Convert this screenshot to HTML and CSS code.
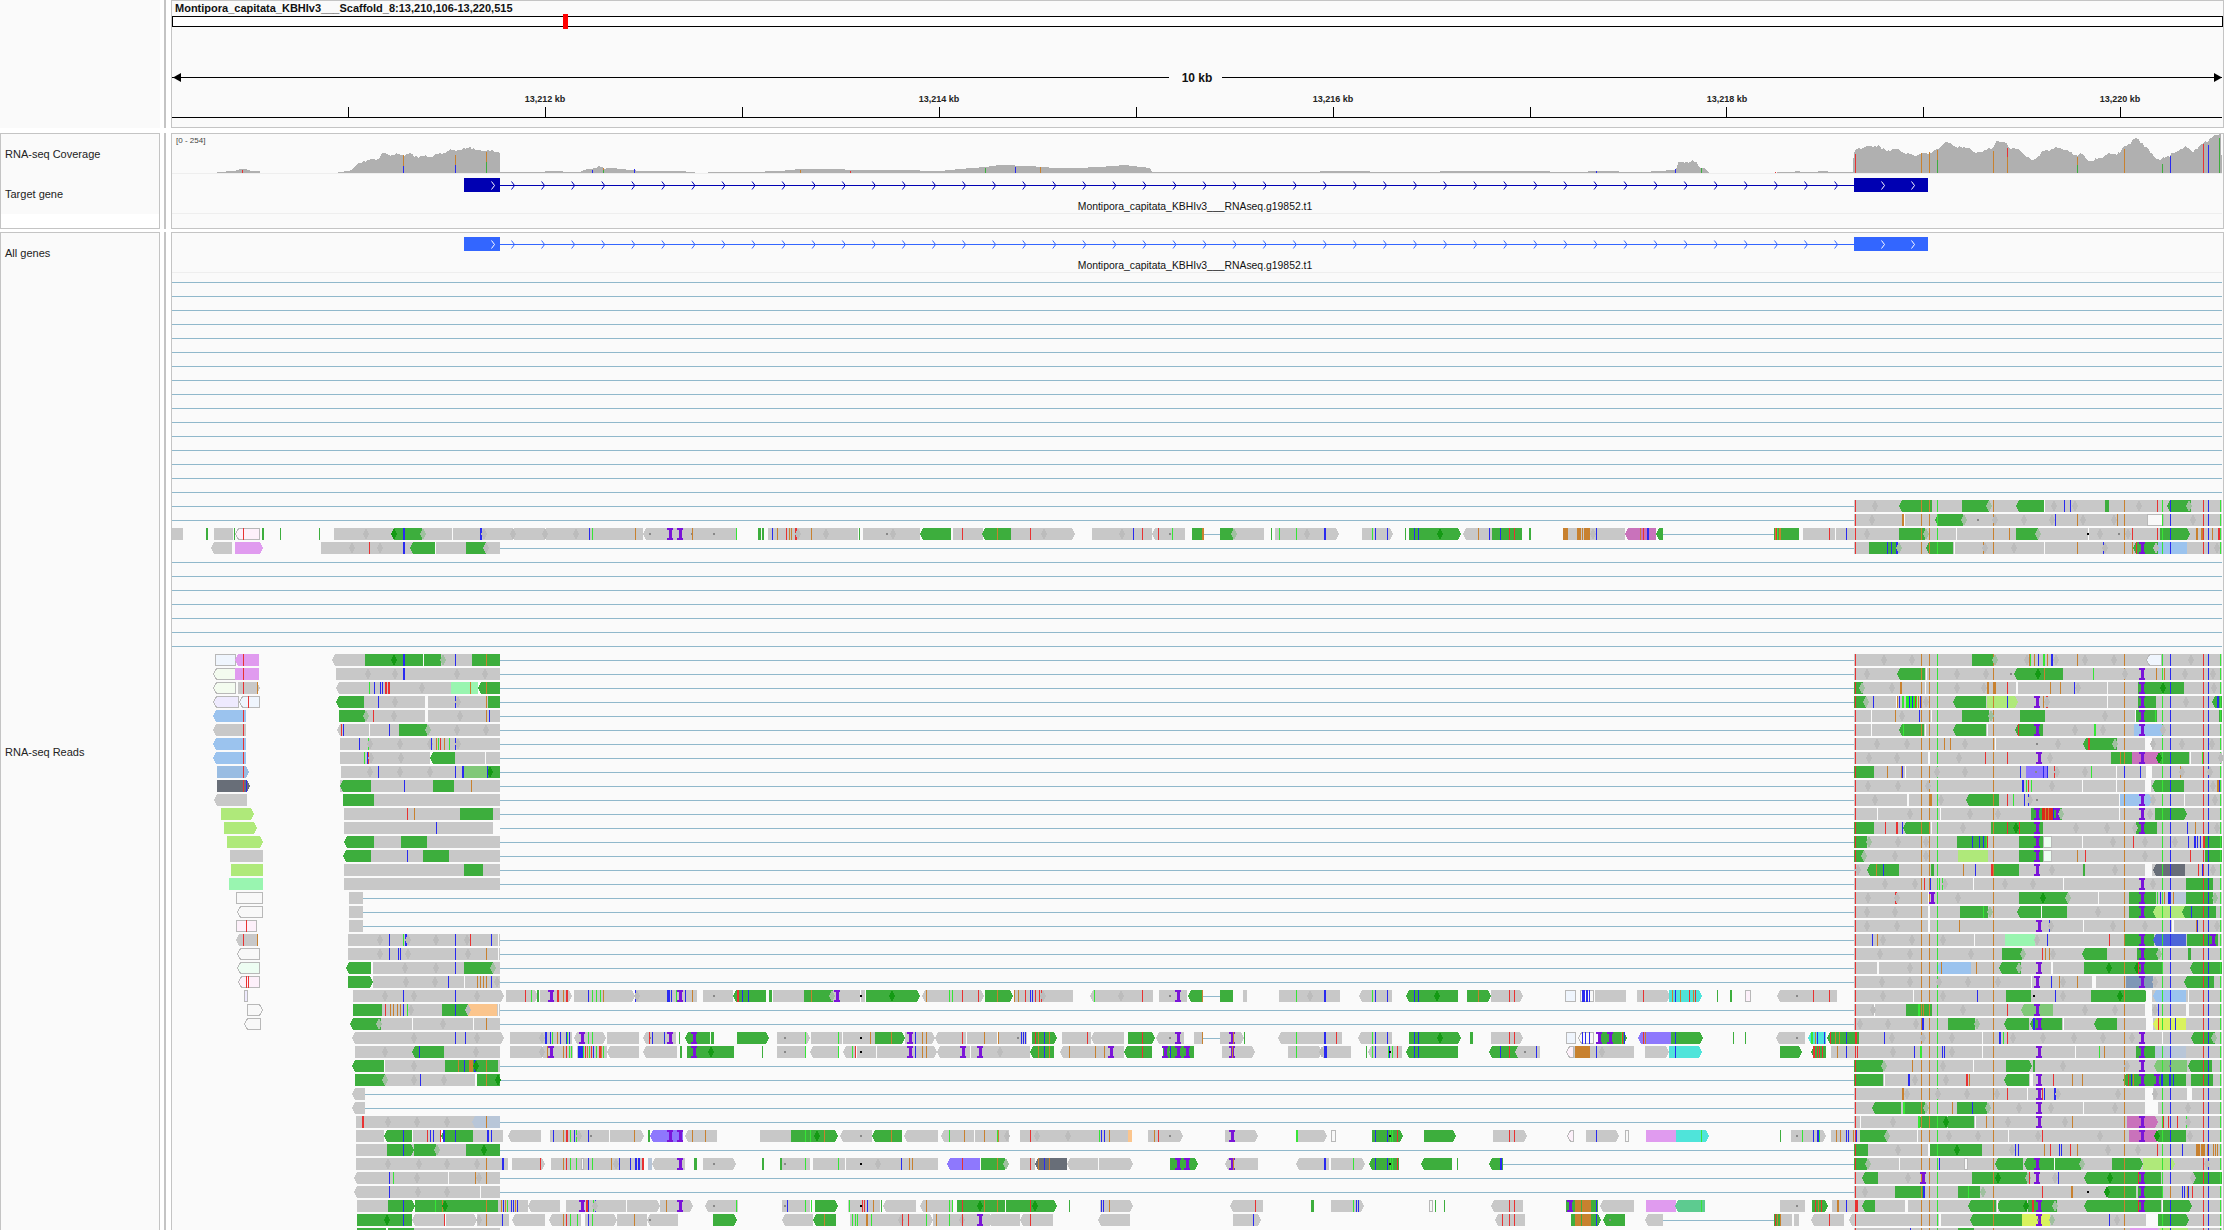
FILE: index.html
```html
<!doctype html>
<html lang="en">
<head>
<meta charset="utf-8">
<title>IGV</title>
<link rel="stylesheet" href="styles.css">
</head>
<body>
<main class="igv">
  <section class="band band-ruler">
    <div class="names names-plain"></div>
    <div class="sep"></div>
    <div class="panel">
      <div class="locus">Montipora_capitata_KBHIv3___Scaffold_8:13,210,106-13,220,515</div>
      <div class="ideogram"><span class="viewport"></span></div>
      <svg class="ruler" viewBox="172 27 2051 100" width="2051" height="100">
        <rect class="ink" x="172" y="77" width="997" height="1"/>
        <rect class="ink" x="1222" y="77" width="1000" height="1"/>
        <polygon class="ink" points="173,77.5 181,73 181,82"/>
        <polygon class="ink" points="2222,77.5 2214,73 2214,82"/>
        <text class="span-label" x="1197" y="82">10 kb</text>
        <rect class="ink" x="172" y="117" width="2050" height="1"/>
        <rect class="ink" x="348" y="107" width="1" height="10"/>
        <rect class="ink" x="545" y="107" width="1" height="10"/>
        <rect class="ink" x="742" y="107" width="1" height="10"/>
        <rect class="ink" x="939" y="107" width="1" height="10"/>
        <rect class="ink" x="1136" y="107" width="1" height="10"/>
        <rect class="ink" x="1333" y="107" width="1" height="10"/>
        <rect class="ink" x="1530" y="107" width="1" height="10"/>
        <rect class="ink" x="1726" y="107" width="1" height="10"/>
        <rect class="ink" x="1923" y="107" width="1" height="10"/>
        <rect class="ink" x="2120" y="107" width="1" height="10"/>
        <text class="tick-label" x="545" y="102">13,212 kb</text>
        <text class="tick-label" x="939" y="102">13,214 kb</text>
        <text class="tick-label" x="1333" y="102">13,216 kb</text>
        <text class="tick-label" x="1727" y="102">13,218 kb</text>
        <text class="tick-label" x="2120" y="102">13,220 kb</text>
      </svg>
    </div>
  </section>

  <section class="band band-feature">
    <div class="names names-boxed">
      <div class="name name-short">RNA-seq Coverage</div>
      <div class="name name-short">Target gene</div>
    </div>
    <div class="sep"></div>
    <div class="panel">
      <svg id="feature" class="track" viewBox="172 134 2051 94" width="2051" height="94">
        <text class="gene-label" x="1195" y="210">Montipora_capitata_KBHIv3___RNAseq.g19852.t1</text>
        <text class="range-label" x="176" y="143">[0 - 254]</text>
      </svg>
    </div>
  </section>

  <section class="band band-data">
    <div class="names names-boxed names-open">
      <div class="name name-short">All genes</div>
      <div class="name name-long">RNA-seq Reads</div>
    </div>
    <div class="sep"></div>
    <div class="panel panel-open">
      <svg id="data" class="track" viewBox="172 233 2051 997" width="2051" height="997">
        <text class="gene-label" x="1195" y="269">Montipora_capitata_KBHIv3___RNAseq.g19852.t1</text>
      </svg>
    </div>
  </section>
</main>
<script src="tracks.js"></script>
</body>
</html>
```
FILE: styles.css
```css
html, body {
  margin: 0;
  height: 1230px;
  overflow: hidden;
  background: #ffffff;
  font-family: "Liberation Sans", Arial, sans-serif;
}
.igv { display: flex; flex-direction: column; width: 2240px; }
.band { display: flex; flex: none; }
.band-ruler { height: 128px; margin-bottom: 5px; }
.band-feature { height: 96px; margin-bottom: 3px; }
.band-data { height: 998px; }

.names { width: 160px; flex: none; box-sizing: border-box; }
.names-plain { background: #fafafa; }
.names-boxed {
  border: 1px solid #c4c4c4;
  background: linear-gradient(#fafafa 80px, #ffffff 80px);
}
.names-open { border-bottom: 0; background: #fafafa; }
.name {
  display: flex;
  align-items: center;
  padding-left: 4px;
  font-size: 11px;
  color: #222222;
}
.name-short { height: 40px; }
.name-long { height: 958px; }

.sep { width: 2px; margin: 0 5px 0 4px; background: #c4c4c4; flex: none; }

.panel {
  width: 2053px;
  box-sizing: border-box;
  flex: none;
  border: 1px solid #c4c4c4;
  background: #fafafa;
  display: flex;
  flex-direction: column;
}
.panel-open { border-bottom: 0; }

.locus {
  height: 15px;
  line-height: 15px;
  padding-left: 3px;
  font-size: 11px;
  font-weight: 700;
  color: #111111;
  white-space: nowrap;
}
.ideogram {
  position: relative;
  height: 11px;
  box-sizing: border-box;
  border: 1px solid #000000;
  background: #ffffff;
}
.viewport {
  position: absolute;
  left: 390px;
  top: -3px;
  width: 5px;
  height: 15px;
  background: #ff0000;
}
.ruler, .track { display: block; flex: none; }
.track { shape-rendering: crispEdges; }

.ink { fill: #000000; }
.span-label { font-size: 12px; font-weight: 700; text-anchor: middle; fill: #111111; }
.tick-label { font-size: 9px; font-weight: 700; text-anchor: middle; fill: #222222; }
.gene-label { font-size: 10.4px; text-anchor: middle; fill: #111111; }
.range-label { font-size: 8px; fill: #444444; }

.rule { fill: #eeeeee; }
.lane { fill: #90b8cb; }
.cover { fill: #b0b0b0; }
.target { fill: #0000b2; }
.allgene { fill: #3366ff; }
.chev-t, .chev-a, .chev-w { fill: none; stroke-width: 1; shape-rendering: auto; }
.chev-t { stroke: #0000b2; }
.chev-a { stroke: #3366ff; }
.chev-w { stroke: #ffffff; }

.b-gray { fill: #c8c8c8; }
.b-g { fill: #3dae3d; }
.b-p { fill: #e09bef; }
.b-b { fill: #9bc3ee; }
.b-b2 { fill: #99bce2; }
.b-m { fill: #c972bb; }
.b-v { fill: #8e78fd; }
.b-l { fill: #afe97a; }
.b-t { fill: #99f5b0; }
.b-c { fill: #4fe4da; }
.b-o { fill: #fbc58d; }
.b-d { fill: #686e78; }
.b-s { fill: #7e97b6; }
.b-y { fill: #d9f25e; }
.b-n { fill: #4d66d8; }
.b-u { fill: #b8c6d8; }
.b-h { fill: #80c878; }
.b-q { fill: #5dcb90; }
.b-nn { fill: #22ee22; }
.b-rr { fill: #d92a1a; }
.b-oo { fill: #c97a1e; }
.b-w, .b-wb, .b-wg, .b-wv, .b-wp, .b-wt { stroke: #b8b8b8; stroke-width: 1; }
.b-w { fill: #f8f8f8; }
.b-wb { fill: #eff5fd; }
.b-wg { fill: #f3fbef; }
.b-wv { fill: #eeeafe; }
.b-wp { fill: #fdf0fa; }
.b-wt { fill: #edfdf2; }
.gap { fill: #fafafa; }

.m-r { fill: #e83232; }
.m-o { fill: #c8812f; }
.m-n { fill: #36e636; }
.m-a { fill: #2a2af0; }
.m-g { fill: #3dae3d; }
.m-k { fill: #000000; }
.m-i { fill: #7a14d8; }
.m-dot { fill: #888888; }
.m-x { fill: #bcbcbc; }
.m-X { fill: #149a14; }
.m-z { fill: #9fc09f; }
```
FILE: tracks.js
```js
var NS = 'http://www.w3.org/2000/svg';
var SCALE = {
  L: { o: 160, s: 2.24 },
  R: { o: 1780, s: 3 },
  S: { o: 0, s: 0.7 },
  A: { o: 500, s: 3 },
  B: { o: 1020, s: 3 },
  C: { o: 1500, s: 3 }
};
var COMMON = 'r226 o424 o448 n472 o640 o1033 n1147 a1171 r1270 a1285 n1319';
var layers = { lanes: '', blocks: '', common: '', gaps: '', marks: '' };

function rect(x, y, w, h, cls) {
  return '<rect class="' + cls + '" x="' + x + '" y="' + y + '" width="' + w + '" height="' + h + '"/>';
}
function centre(k) { return 282 + 14 * k; }

function block(c, a, b, left, right, cls) {
  var t = c - 6, e = c + 6, tip = 3, pts;
  if (/b-w/.test(cls)) { t += 0.5; e -= 0.5; a += 0.5; b -= 0.5; }
  var m = c + 0.0;
  pts = (left ? (a + tip) : a) + ',' + t + ' ' + (right ? (b - tip) : b) + ',' + t + ' ';
  if (right) pts += b + ',' + m + ' ';
  pts += (right ? (b - tip) : b) + ',' + e + ' ' + (left ? (a + tip) : a) + ',' + e;
  if (left) pts += ' ' + a + ',' + m;
  return '<polygon class="' + cls + '" points="' + pts + '"/>';
}
function mark(c, g, tok) {
  var m = tok.match(/^([a-zA-Z.:|])(\d+)(?:\*(\d+))?$/);
  if (!m) return;
  var x = Math.round(g.o + (+m[2]) / g.s), w = +(m[3] || 1), t = m[1], s;
  if (t === '|') { layers.gaps += rect(x, c - 6, 1, 12, 'gap'); return; }
  if (t === 'x' || t === 'X' || t === 'z') {
    layers.marks += '<polygon class="m-' + t + '" points="' + (x - 3) + ',' + c + ' ' + x + ',' + (c - 6) + ' ' + (x + 3) + ',' + c + ' ' + x + ',' + (c + 6) + '"/>';
    return;
  }
  if (t === 'I') {
    s = rect(x - 3, c - 6, 6, 2, 'm-i') + rect(x - 1, c - 6, 3, 12, 'm-i') + rect(x - 3, c + 4, 6, 2, 'm-i');
    layers.marks += s;
    return;
  }
  if (t === '.') { layers.marks += rect(x, c - 1, 2, 2, 'm-dot'); return; }
  if (t === ':') { layers.marks += rect(x, c - 1, 2, 2, 'm-k'); return; }
  s = rect(x, c - 6, w, 12, 'm-' + t);
  if (t === 'g' || t === 'n' || t === 'o' || t === 'r' || t === 'a' || t === 'k') layers.marks += s;
}
function row(k, gname, text, base) {
  var g = SCALE[gname], c = centre(k), toks = text.split(/\s+/), i, t, m;
  if (base) layers.blocks += block(c, 1854, 2222, false, false, 'b-gray');
  for (i = 0; i < toks.length; i++) {
    t = toks[i];
    if (!t) continue;
    m = t.match(/^([_~])(\d+)-(\d+)$/);
    if (m) {
      var a0 = Math.round(g.o + (+m[2]) / g.s), b0 = Math.round(g.o + (+m[3]) / g.s);
      if (m[1] === '_') layers.gaps += rect(a0, c - 6, b0 - a0, 12, 'gap');
      else layers.lanes += rect(a0, c, b0 - a0, 1, 'lane');
      continue;
    }
    m = t.match(/^(?:([a-z0-9]+):)?(<)?(\d+)-(\d+)(>)?$/);
    if (m) {
      layers.blocks += block(c, Math.round(g.o + (+m[3]) / g.s), Math.round(g.o + (+m[4]) / g.s), !!m[2], !!m[5], 'b-' + (m[1] || 'gray'));
      continue;
    }
    mark(c, g, t);
  }
  if (base) {
    COMMON.split(' ').forEach(function (tok) {
      var q = tok.match(/^([a-z])(\d+)$/);
      var x = Math.round(SCALE.R.o + (+q[2]) / 3);
      layers.common += rect(x, c - 6, 1, 12, 'm-' + q[1]);
    });
  }
}

/* ---------- lanes behind the reads ---------- */
(function () {
  var k, mid = [19, 52, 53, 56, 57, 58, 59, 60, 62, 64, 65];
  for (k = 27; k <= 50; k++) mid.push(k);
  for (k = 0; k <= 26; k++) {
    if (k < 16 || k >= 20) layers.lanes += rect(172, centre(k), 2050, 1, 'lane');
  }
  layers.lanes += rect(172, centre(16), 1682, 1, 'lane') + rect(172, centre(17), 1682, 1, 'lane');
  mid.forEach(function (n) { layers.lanes += rect(500, centre(n), 1354, 1, 'lane'); });
})();

/* ---------- left block, first rows ---------- */
[
 [18,'26-52 g103*2 121-164 wp:<167-224 r185 g165 g228*2 g269 g357 390-524 x461 g:524-587 X525 a545*2 z588 587-1073 |655 a717*2 x725 x790 |790 x862 |862 x932 a960 n968 o1063'],
 [19,'<115-161 p:168-231> 361-430 x430 430-762 r468 x493 a545*2 g:<561-617 |617 g:685-730 x730'],
 [27,'wb:124-170 p:<168-222 r185 <385-459 g:459-630 X524 a545*2 |588 z633 630-699 a660 g:699-762 o730'],
 [28,'wg:<118-170 p:168-222 r185 394-762 x465 x526 a545*2 x665 x727'],
 [29,'wg:<118-170 175-225> r185 o218 <394-652 n468 a480 a492 a498 r505*2 r510*2 x586 t:652-712 o695 g:<712-762 o730'],
 [30,'wv:<118-178 wb:<178-224 r198 g:<394-457 458-594 a489 x526 _594-600 600-735 a660 x668 o731 g:735-762'],
 [31,'b:<118-192 r185 g:401-459 z462 460-594 r476 x525 _594-600 600-762 x673 a738 o731'],
 [32,'<118-192 r185 <396-535 r405 a410 |468 a514 g:535-598 z600 598-762 x665 x730'],
 [33,'b:<118-192 r185 403-762 a445 n465 x470 x538 x605 a608 o618 n622 r628 o636 n648 a660 x668'],
 [34,'b:<118-192 r185 403-605 n458 a463 r466 x472 x540 g:<605-660 660-762 |727'],
 [35,'b2:128-200> r185 405-680 x470 a489 x538 x605 a660 a677*2 h:680-733 g:733-762 X740 a733'],
 [47,'<170-218 r185 o218 421-762 x492 a514 n544 a548*2 x555 x618 a660 x688 r695 a742 |758'],
 [48,'w:<172-223 421-762 x492 a514 a532 a538 x556 a660 x690 o730 |758'],
 [49,'wt:<172-223 g:<416-473 477-681 x548 x618 a660 g:681-745 z747 745-762'],
 [50,'wp:<174-223 r193 r197 g:421-478> 478-762 x550 x615 a645 |682 o710 o717 o723 o730 a742 x755'],
 [51,'wv:189-198 432-770> x505 a545 x570 a660 x710'],
 [52,'w:194-230> g:432-497 497-632 r504 o515 o522 o530 o538 a545 n553 x563 g:632-690 a660 o:690-755 x690 |758 755-762'],
 [53,'w:<189-226 g:<425-495 z490 495-762 |565 x634 |702 o730'],
 [54,'<430-770> x570 a660 a684 x710'],
 [55,'437-762 x505 g:<565-636 a580 x707'],
 [56,'g:<430-502 504-638 x570 g:638-757 o668 a680 o692*3 o700 a704*2 X708 o730 757-762'],
 [57,'g:437-503 z503 505-706 x570 a583 x636 g:710-762 o730 X757'],
 [58,'<430-459 ~459-762'],
 [59,'<430-459 ~459-762'],
 [60,'439-762 r453*2 x510 x575 x642 u:<700-762 o730'],
 [61,'439-502 g:<502-564 a545 567-630 r599 a605 a612 r628 g:<630-701 a635*2 a660 701-768 a733*2 a741'],
 [62,'439-762 g:508-568> a545 g:568-618 z620 g:685-762 X725'],
 [63,'439-780> x510 x580 x643 x710 o730 a767'],
 [64,'<435-762 a514 n522 x575 |645 o706 x715 o730'],
 [65,'<435-762 a514 x578 x642 |716'],
 [66,'441-511 g:511-572> a545 g:572-697 n617 o632 X638 g:697-757 o730 757-762'],
 [67,'g:441-510 X508 g:510-565 a545 <565-638 r636 641-710> 710-762 o730 x715'],
 [68,'g:441-506 g:511-568 570-762']
].forEach(function (r) { row(r[0], 'L', r[1]); });

[
 [36,'d:152-175> a172 r170 238-350 g:<238-260 g:303-318 a283 o330'],
 [37,'<150-173 240-350 g:240-262'],
 [38,'l:155-178> 241-350 g:322-345 o290 r285'],
 [39,'l:157-180> 241-345 a305'],
 [40,'l:159-184> g:<241-262 262-350 g:281-299'],
 [41,'161-184 g:<240-260 260-350 g:296-314 a285'],
 [42,'l:162-184 241-350 g:325-338'],
 [43,'t:160-184 241-350'],
 [44,'w:165-184 244-254 ~254-350'],
 [45,'w:<166-184 244-254 ~254-350'],
 [46,'wp:165-180 r172 244-254 ~254-350']
].forEach(function (r) { row(r[0], 'S', r[1]); });

/* ---------- middle reads ---------- */
[
 [18,'A','417-430 <430-710 .448 I510 I540 .572 o577 .640 n709 g775*3 g785*2 805-1075 a815 o832 r859 o866 o874 r885*2 x893 o934 x978 g1078 1090-1260 .1158 x1178 g:<1260-1353 |1355 1360-1450 r1387 g:<1445-1533 o1490 1533-1560'],
 [18,'B','0-165> r31 x72 215-395 x307 a340 r367 <395-495 r415 .448 n457 g:516-549 o547*2 ~549-600 g:600-640 z642 640-732 g754 765-957> n778 n829 x860 a912*2 1026-1118> n1057 a1066 a1102 g1156 g:1167-1323> a1183 a1195 X1260 <1330-1480 o1375 a1408 g:1416-1506 a1441 r1468 r1482'],
 [18,'C','g:0-65> g86*2 189-375 o190*3 o199*2 o232*3 o240 o247 o253*3 o262*3 x280 a289 m:<375-468 o420 r430 a441*2 g:<468-489 ~489-822 g:822-897 o824*2 r828 n832 o836'],
 [18,'C','909-1005 r988 <1005-1062 a1039'],
 [51,'A','18-115> r76 n94 g110*2 120-215> I152 r172*2 o190 r197*2 222-405> a265 n277 n287 n301 o310 a406 x410 405-500 a502 a505*2 a513 n527 I540 a556 o577 500-590 609-700 .640 g:<700-798 r710*2 a727 a745 g:807-816 819-912 g:912-1000 o934 z995 I1010 1000-1080 1083-1095 :1081 g:1098-1175 g:1175-1260> X1175 <1265-1380 o1279 n1348 n1355 1380-1453> r1387 r1435 g:1455-1540> o1490 1543-1560 o1543 o1555'],
 [51,'B','0-158 r16 a31 a37 r46 r58 r64 x70 <210-398 n222 x303 r367 417-500 .448 I474 g:<505-549 o547 ~549-600 g:600-638 669-681 777-960 n829 x870 a912*2 <1017-1116 n1057 a1066 a1102 g:<1158-1255 a1183 a1195 g:1255-1314 X1252 g:1341-1413> o1375 1413-1510> r1468 r1483'],
 [51,'C','wb:195-227 w:240-282 a246*3 a258*2 a268 285-378 411-510> r430 c:507-606> o517 a526 o540 r566 o578 r586 g652 g:690-697 wp:736-752 <830-915 .887 915-1011 r940 r988'],
 [54,'A','0-10> 30-130 x125 130-217 a135*2 a151 n157 o170 a181 a197 n201 a207 <222-318> I246 n265 n277 320-417 <430-527 .448 r448 a457 a493 I510 g538 g:<555-630 I582 g:632-642 g:711-807> 831-930> .851 n916 933-1027 n1015 1030-1125 :1081 o1110 g:1125-1215> o1174 1215-1305> I1230 a1246 o1267 o1279 <1305-1398 r1387 1401-1490 o1453 1495-1560 o1495 .1552'],
 [54,'B','0-20 a3 a9 a15 g:36-110> r46 o55 a73 o88 126-213 r202 <213-313 g:324-405> r367 <408-492 .448 I474 522-548 o547 ~549-600 600-672> I636 o640 g673 <775-873 n829 873-966 a912*2 r949 <1015-1116 n1057 a1066 a1102 g:1167-1255 a1183 a1195 g:1255-1322> X1260 g:1350-1359 1413-1510> r1468 r1483'],
 [54,'C','wb:198-227 w:<235-282 a246 a256 a268 I297 g:300-381> I330 n362 a372 r367 v:<414-513 r428 o435 g:513-609> a526 g700 g736 <829-915 .887 c:<925-978 n933 n946 a952'],
 [55,'A','30-125 x127 130-220 o142 I152 o190 r198 n208 n212 232-320 a235*3 a243*2 n250 r256 o262 n268 r274 a280 n288 r296*2 o303 n310 <320-417 <430-530 g541*2 g:561-635 I582 g:635-702 X632 g787 831-915 .851 n916 <930-1015 n1015 <1030-1065 n1057 r1065 1070-1127 :1081 1130-1220 1215-1310> I1230 a1246 o1267 o1279 <1310-1410 I1389 1413-1500 I1440 x1500 <1462-1560'],
 [55,'B','0-30 g:<30-102 o55 a73 o88 <120-312 o148 o226 o253 I273 g:<313-396 r367 g:430-522 I435 .448 a450 I474 I501 606-705> I636 o635 804-905> n829 x905 908-993 a912*2 a918 g1038 <1045-1146 n1057 a1066 n1103 a1108 n1115 :1108 r1132 g:<1158-1255 a1183 a1195 g:1255-1314 g:<1407-1494 a1441 r1468 <1485-1560 .1513 a1549'],
 [55,'C','wp:<198-222 222-270 o225*3 o234*3 o243*3 o252*3 o261*3 270-402 a289 x305 435-507> c:507-606> a526 g:840-905> g:<932-978 r942 o950 r958 o966'],
 [61,'A','0-8 <25-123 150-250 a160 o190 r198*2 n210 a222 n228 x237 250-327 a265 .271 330-432> n401 o403 g445*2 v:<450-550 I510 I540 <555-651 o577 o616 780-873 g:873-1015> n916 n931 X950 o973 <1020-1115 .1081 g:<1115-1206 o1174 <1212-1314 <1323-1422 n1348 o1393 1425-1527 o1453 n1490 o1493 x1522'],
 [61,'B','0-48 r31 x50 48-145 x145 145-237 n238 a244 a251 240-325 o268 o:325-335 384-488> o403 r415 .448 615-713> I636 n827*2 828-920> w:934-947 g:1056-1148> a1066 a1102 n1111 n1117 :1108 r1132 g:1212-1308> 1419-1520> r1468 r1483'],
 [61,'C','wp:<200-221 258-358> a289 w:376-386 p:438-527 c:527-626> n604 g841 873-978> .887 n907 a940 a952 n956'],
 [63,'A','0-24 a6 a9 36-135> r121 153-430 o190 r198 n210 n228 w:243-252 a265 n277 o334 x347 a358 a390 a405*2 a414*2 r426*2 u:443-456 <456-555 I540 g:582-591 609-708> .640 g787*2 g840*2 846-930 .852 n916 939-1035 n1015 1038-1120 1120-1314 :1081 x1135 a1204 o1228 o1237 v:<1340-1440 r1387 g:1443-1515 o1490 z1517'],
 [63,'B','0-45 r31 d:<45-141 o55 a73 o88 <140-235 237-338> g:450-533> I474 I501 <615-714 I636 o638 <827-927 a912*2 933-1034> n1000 g:<1047-1137 a1066 a1102 n1111 n1117 :1108 r1132 g:<1202-1296 g1312 g:<1407-1449 a1441 ~1449-1560'],
 [63,'C','g:0-9 a2 ~9-1062'],
 [66,'A','0-85 o3 a8 o15 n20 a32 a38 o45 a52 <85-180 198-378 I247 r258*2 a265 n278 a285 x285 381-480> 480-578> o499 I540 <615-714 .640 n709 846-930 .852 a862 n916 n932 g:945-1015> 1045-1140 n1048 :1081 r1087 r1092 a1102 o1120 g1144 <1150-1248 <1260-1356 o1279 n1348 n1355 g:1371-1515 r1387 X1440 o1453 o1490 |1516 g:1518-1560'],
 [66,'B','g:0-47> r31 g:38-112> X45 g148 240-340> a243 a250 o268 <630-729 r706 g:873-882 933-1033> n1000 a1008 a1014 w:1228-1238 g1246 g1273 <1413-1510 r1468 r1483'],
 [66,'C','0-69 r28 r43 g:199-217 I210 g:217-294 o225*3 o235*3 o245*3 o255*3 o265*3 a289 <300-402 p:438-527 q:<525-615 n604 <840-915 .887 g:936-984> r945 o954 r962'],
 [67,'A','0-27 a6 <36-135 <147-243 o190 r198 n210 n230 255-351> a265 n277 351-441 o403 <441-534 .448 g:639-711> <845-940 g:<940-1008 o973 1050-1200 n1057 n1066 n1072 o1097*2 n1112 x1203 1200-1300> r1207 r1225 n1279 o1309 1300-1386 n1348 x1385 r1387 1386-1470 I1440 <1465-1560'],
 [67,'B','<0-99 r31 <233-330 639-723> a700 <1425-1515 r1447 r1468 r1483'],
 [67,'C','0-75 r7 r28 r43 g:213-304> o225*3 o235*3 o245*3 o255*3 o265*3 a289 g:<309-375 .327 <435-489 ~489-822 g:822-876 r825 o830']
].forEach(function (r) { row(r[0], r[1], r[2]); });

/* ---------- right block ---------- */
[
 [16,'g:<358-456 g:546-628 z628 g:<708-792 x285 |792 a853 a871 x822 g:975-987 x885 x1076 r1132 g:<1160-1232 z1228'],
 [17,'x276 o367*2 |373 g:<465-550 z553 .591 x646 x731 x815 a826 o892 x910 x1003 o1012 w:1102-1153 x1240'],
 [18,'g:0-57 o1 69-222 r148 |165 a199 x262 g:357-435 z438 |527 o686 g:708-775 z775 :922 |923 x960 .1013 x1045 r1057 r1132 g:1140-1230> o1247*2 o1263*2 o1295 r1315*2'],
 [19,'g:267-352 a322 a334 a348*2 z358 g:<437-519 |521 |793 o610 x615 x702 o892 a970 x975 o1055 g:<1060-1135 r1068 I1086 b:1135-1222 x1128 x1310'],
 [27,'x312 x396 g:577-643 z646 x740 o748 n750 o763 a774 n788*2 o800 a812*2 x827 o892 x915 x1003 wb:<1098-1145 x1232'],
 [28,'x262 g:<350-435 |437 x530 x618 .690 g:<703-850 X775 o792 n940 x1034 I1086 o1129 o1152 x1215 x1300'],
 [29,'g:222-250 z246 x336 o360*2 |435 x530 x612 o620*2 o642*2 r682 _708-714 o811 o841 a883 x893 |982 g:1075-1212 I1086 X1148 x1302'],
 [30,'g:222-258 z258 a280 |348 o351 a358 n366*2 nn:378-410 a387 a395 r405 o415 a420 x437 g:<520-618 l:620-715> a682 I770 o788 r798*2 x802 |982 g:1075-1128 I1086 x1217 g:<1297-1325 a1310*2'],
 [31,'|274 o346 x365 a418 |454 g:546-628 z632 g:720-795 x975 |1066 g:1068-1130 I1086 n1125 g:1318-1325'],
 [32,'|274 g:<358-432 |434 n370 g:<520-618 |620 g:<705-789 r715 I770 x885 n942*2 x970 b:1062-1150 I1086 x1148'],
 [33,'x290 x382 o492 o511 x556 |645 .768 x833 g:<908-1010 r925*2 z1005 _1095-1115 x1120 x1207 x1297'],
 [34,'x267 x350 _443-449 x538 r616 r682 I776 x810 g:993-1055 o1020 m:1055-1140 I1086 g:<1130-1227 X1137 |1229 n1267 x1322'],
 [35,'g:222-282 o322 o362 a365 |375 x470 x555 a721 v:738-800 .765 a790 a800 r823 x830 x915 n934 |1009 a1033 a1081 _1097-1117 o1200 x1207 x1290'],
 [36,'x265 x355 x445 a725*2 n737 r743 n754 x815 |905 |1009 _1095-1112 g:<1115-1212 x1300 o1310*2 a1317'],
 [37,'x285 _382-386 o450*2 x483 g:<558-657 r682 n700 a733 a743 x750 .767 |1018 b:1020-1115> I1086 x1120 |1213 x1305'],
 [38,'|292 x390 |480 x570 x655 g:753-846 rr:787-820 o795 o805 a820 I770 I830 z843 |1018 I1086 x1110 g:1125-1222>'],
 [39,'g:222-282 r316 r348*2 a365 g:<368-450 |452 x548 g:633-716 r682 X708 g:716-789 r716 I770 x888 x980 x1065 g:1068-1131 I1086 a1220 o1246 x1310'],
 [40,'g:222-260 z266 x355 x438 g:531-625 a577 a598 a610 n619 r622 g:717-790 I770 wt:790-817 |907 x1000 r1060 x1095 x1185 a1225 a1243*2 a1252 a1261 r1272 g:1275-1325'],
 [41,'g:222-252 z252 x345 x438 l:533-625 g:717-790 I770 wt:790-817 o892 r915 x1095 r1231 g:1275-1325'],
 [42,'x235 g:<260-357 o288 a310 g:453-462 o550 a586 g:<633-717 r632*2 I770 x815 g:909-915 x1005 _1095-1115 d:<1118-1215 r1255 a1267 x1300'],
 [43,'x315 x405 o424 r433 a450 n478 n487 x495 |580 x675 x760 |850 I1086 x1120 g:1218-1300'],
 [44,'x265 r344*2 x350 _443-447 I456 x535 g:717-863 X788 z865 |955 g:1047-1127 I1086 n1131 a1140 o1153 a1165*3 o1180 u:1180-1218 g:1218-1300 z1305'],
 [45,'x262 x345 _443-449 g:540-625 n610 z630 g:<712-782 |783 g:783-861 x955 g:1047-1127 I1086 l:<1118-1218 g:<1207-1308 a1232'],
 [46,'x262 x352 _443-449 o538 I776 a808 x812 |908 x1000 x1095 _1175-1182 o1247 a1252 x1310'],
 [47,'a275 o292 x310 x395 x490 |583 t:676-765 x770 a802 r988 g:1035-1122 I1086 n:<1118-1218 g:1220-1315 I1298'],
 [48,'x300 x390 x572 g:665-725 z730 r787 o796 o808 x818 g:<905-980 g:1072-1135 I1086 z1138 g:1225-1232'],
 [49,'_291-298 x390 b:<472-572 o484 o589 g:<658-722 z718 I776 _813-818 g:912-1145 X988 X1070 r1075 I1086 g:<1230-1325'],
 [50,'x305 x390 x478 x565 x655 _753-757 I770 a814 o838 x848 o892 _937-947 s:1037-1120 I1086 x1125 g:<1212-1302'],
 [51,'0-75 .47 <75-170 r100 r148 _171-219 x310 |400 x490 a592 g:678-752 :760 a824 x850 g:933-1105> X1020 _1097-1115 b:<1118-1218 |1225'],
 [52,'x278 |283 g:378-455 n415*2 o430 x550 r682 h:<722-818 I770 x915 x1005 _1095-1117 x1125 a1135 _1218-1228'],
 [53,'x240 x323 x408 a427*2 g:504-585 z590 g:<672-748 g:<750-846 a758*2 I776 |848 g:<942-1011 _1097-1120 y:<1120-1218 r1135 a1170 a1185'],
 [54,'0-75 .47 c:<85-137 n95 o105 a132 g:<140-237 r150 o165 o178 a198 r228 a313 x335 x430 x515 |605 a656 a660 n668 r682 x700 x790 x883 x970 x1055 I1086 |1147 g:<1232-1305 z1303'],
 [55,'g:0-65> g:<92-137 r100 r112 r125 153-222 o172 a198 r225 r232 x340 a403 n420*2 a487 a493 x517 |605 I776 |885 n958 o973 g:1068-1125 I1086 u:1125-1218'],
 [56,'g:222-310 z312 o397 x490 |580 g:678-755> g:760-765 x850 x1040 I1086 h:<1122-1222 .1167 g:<1225-1295'],
 [57,'g:222-310 |311 a385*2 x405 x497 r559*2 o568 g:<672-748 _750-758 I776 r820 o875 o905 g:<1030-1120 r1045 a1052 o1060 I1086 I1130 g:1120-1218 a1142*2 a1168*2 a1180 g:1233-1300'],
 [58,'o367*2 x380 x475 x562 x650 r682 |742 I776 r787 a793 a822*2 x833 x1015 _1095-1118 x1125 _1222-1235'],
 [59,'g:<275-363 n368*2 g:368-435 z438 o515 g:531-622 a575 z625 x717 I776 x812 |910 x1005 _1095-1135 x1225'],
 [60,'_240-243 x338 n414*2 g:<415-500 g:<495-582 X497 |584 o619 x683 I776 x855 o875 m:1041-1135> I1086 r1150 r1165 r1192 n1217 x1225'],
 [61,'g:0-3 33-120> n67 a100 a115 153-240 o168 o180 a198 a205 o220 a228 g:240-322 z322 |411 x508 x593 |685 x773 r787 x960 m:1047-1130 I1086 g:<1125-1218 X1130 x1230'],
 [62,'g:222-264 x355 _444-450 g:450-606 X532 x695 a706 a715 o793 r811 a838 a844 r871 o890 x985 x1075 r1132 a1207 o1247*2 o1255*2 o1263*2 o1270*2 o1280 o1300 o1306 o1312'],
 [63,'g:222-262 z265 _357-360 a478 w:551-565 g:<645-730 g:<732-822 I770 |823 g:825-902 z905 g:996-1090> l:1090-1185> x1280'],
 [64,'g:<245-293 x385 I429 g:576-742 X655 z745 r748 I770 x825 a835 g:<912-1072 X990 g:1072-1143 r1075 I1086 x1240 g:<1230-1325'],
 [65,'x255 g:345-432 a428*2 g:534-600 n565 z608 r785 o873*2 :922 g:<975-1068 X982 g:1075-1150 I1086 o1170 a1205 a1212 o1220 a1225 r1235'],
 [66,'0-75 .47 g:96-143> 155-222 o170*2 a198 r228*2 g:<245-285 _375-385 g:<565-648 |650 g:<650-740 X738 g:745-830 r755 r758 I776 z825 g:<912-1072 g:1072-1143 r1075 I1086 |1147 g:1149-1235>'],
 [67,'o1 3-36 42-57 <92-192 r148 <208-222 _476-484 g:<570-725 y:725-810 I776 .772 z815 a988 x1012 _1097-1133 g:1133-1228>'],
 [68,'g:535-582 p:1050-1135 l:1140-1225 a390']
].forEach(function (r) { row(r[0], 'R', r[1], true); });

function chevrons(y, from, to, step, cls) {
  var s = '', x;
  for (x = from; x < to; x += step) {
    s += '<path class="' + cls + '" d="M' + (x - 1.5) + ' ' + (y - 3.5) + 'L' + (x + 1.5) + ' ' + (y + 0.5) + 'L' + (x - 1.5) + ' ' + (y + 4.5) + '"/>';
  }
  return s;
}
function gene(y, cls, chev) {
  return rect(464, y, 36, 14, cls) + rect(1854, y, 74, 14, cls) +
    rect(500, y + 7, 1354, 1, cls) +
    chevrons(y + 7, 513, 1850, 30.07, chev) +
    chevrons(y + 7, 493, 494, 30, 'chev-w') +
    chevrons(y + 7, 1883, 1884, 30, 'chev-w') + chevrons(y + 7, 1913, 1914, 30, 'chev-w');
}
/* roughen the tall parts of the coverage outline with a fixed ripple */
function ripple(points) {
  var out = [], i, t, n, x, y;
  for (i = 0; i < points.length - 1; i++) {
    n = Math.max(1, Math.round((points[i + 1][0] - points[i][0]) / 2));
    for (t = 0; t < n; t++) {
      x = points[i][0] + (points[i + 1][0] - points[i][0]) * t / n;
      y = points[i][1] + (points[i + 1][1] - points[i][1]) * t / n;
      if (y < 168 && t > 0) y += Math.sin(x * 1.31) * 0.9 + Math.sin(x * 0.47) * 0.9;
      out.push([x, y]);
    }
  }
  out.push(points[points.length - 1]);
  return out;
}
function coverPath() {
  var a = [[446,519],[450,515],[480,514],[497,507],[507,508],[520,513],[536,514],[536,519],[697,519],[700,515],[718,514],[725,510],[733,498],[740,490],[750,482],[780,477],[788,460],[800,462],[810,464],[830,464],[845,460],[855,470],[870,468],[885,472],[900,463],[915,460],[925,452],[945,450],[960,447],[970,441],[985,450],[1003,452],[1028,455],[1032,462],[1032,516],[1100,517],[1140,513],[1160,513],[1165,516],[1195,516],[1210,508],[1240,502],[1270,505],[1300,510],[1325,513],[1400,513],[1430,516],[1436,518],[1460,518],[1465,516],[1480,516]];
  var m = [[750,172],[780,171],[800,169],[830,169],[860,170],[900,170],[940,171],[960,169],[985,167],[1000,165],[1030,166],[1055,168],[1075,168],[1100,167],[1125,165],[1150,168],[1152,172],[1300,172],[1340,171],[1400,172],[1480,171],[1540,171],[1560,172]];
  var b = [[70,516],[105,516],[110,513],[170,513],[190,517],[245,517],[250,513],[275,513],[290,510],[305,508],[310,487],[320,485],[350,485],[360,503],[370,505],[378,518],[525,518],[545,516],[570,516],[575,512],[585,516],[620,516],[625,513],[640,513],[650,516],[700,517],[703,462],[710,447],[730,440],[750,438],[757,435],[765,447],[780,451],[795,447],[805,449],[820,462],[845,465],[855,458],[875,460],[890,447],[905,430],[912,426],[925,437],[945,443],[960,443],[975,458],[1000,450],[1015,445],[1022,424],[1045,430],[1050,443],[1075,450],[1090,470],[1100,479],[1110,478],[1130,452],[1145,447],[1165,443],[1180,450],[1195,465],[1215,462],[1225,480],[1240,482],[1270,465],[1300,458],[1310,438],[1335,415],[1350,430],[1375,470],[1390,480],[1405,468],[1425,455],[1445,438],[1460,455],[1485,432],[1505,412],[1525,403],[1528,519]];
  var left = ripple(a.map(function (p) { return [p[0] / 2.063, p[1] / 3]; }));
  var right = ripple(b.map(function (p) { return [1540 + p[0] / 2.24, p[1] / 3]; }));
  var pts = left.concat(m).concat(right).map(function (p) { return (+p[0]).toFixed(1) + ',' + (+p[1]).toFixed(1); });
  return '<polygon class="cover" points="' + pts.join(' ') + '"/>';
}
function coverMarks() {
  var segs = [
    [242,170,173,'r'],[403,155,166,'o'],[403,166,173,'a'],[455,155,165,'o'],[455,165,173,'a'],[486,152,162,'o'],[486,162,173,'g'],
    [592,170,173,'a'],[603,168,173,'o'],[603,170,173,'g'],[634,169,173,'a'],[800,170,173,'o'],[850,171,173,'r'],[985,168,173,'g'],[1015,167,173,'a'],[1040,167,173,'o'],
    [1596,171,173,'a'],[1675,169,173,'a'],[1701,168,173,'g'],[1775,172,173,'r'],
    [1855,154,173,'r'],[1921,153,173,'o'],[1929,152,173,'o'],[1937,150,160,'o'],[1937,160,173,'g'],[1993,151,173,'o'],[2007,148,157,'r'],[2007,157,173,'o'],[2077,157,165,'o'],[2077,165,173,'g'],[2124,149,173,'o'],[2162,164,173,'g'],[2170,156,173,'a'],[2203,144,173,'r'],[2208,145,173,'a'],[2219,138,173,'g']
  ], s = '';
  segs.forEach(function (q) { s += rect(q[0], q[1], 1, q[2] - q[1], 'm-' + q[3]); });
  return s;
}

var feature = document.getElementById('feature');
var data = document.getElementById('data');
feature.insertAdjacentHTML('afterbegin',
  coverPath() + coverMarks() + rect(172, 173, 2050, 1, 'rule') + rect(172, 213, 2050, 1, 'rule') +
  gene(178, 'target', 'chev-t'));
data.insertAdjacentHTML('afterbegin',
  gene(237, 'allgene', 'chev-a') + rect(172, 272, 2050, 1, 'rule') +
  layers.lanes + layers.blocks + layers.common + layers.gaps + layers.marks);
```
